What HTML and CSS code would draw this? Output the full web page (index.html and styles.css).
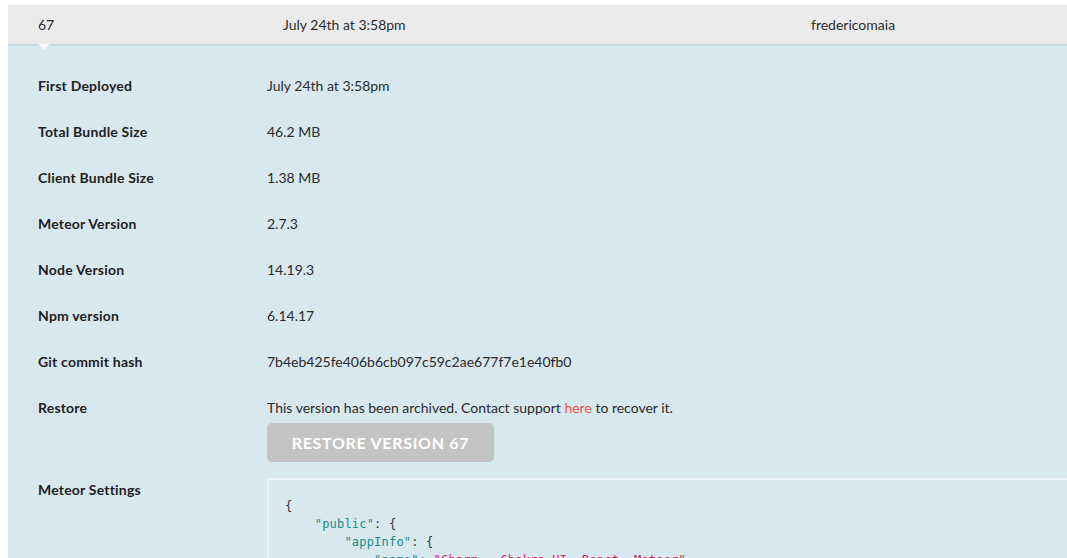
FILE: index.html
```html
<!DOCTYPE html>
<html lang="en">
<head>
<meta charset="utf-8">
<title>Version 67</title>
<link rel="stylesheet" href="styles.css">
</head>
<body>
<div class="page">
  <div class="version-head">
    <span class="col-num">67</span>
    <span class="col-date">July 24th at 3:58pm</span>
    <span class="col-user">fredericomaia</span>
    <span class="caret"></span>
  </div>
  <div class="details">
    <div class="row"><div class="label">First Deployed</div><div class="value">July 24th at 3:58pm</div></div>
    <div class="row"><div class="label">Total Bundle Size</div><div class="value">46.2 MB</div></div>
    <div class="row"><div class="label">Client Bundle Size</div><div class="value">1.38 MB</div></div>
    <div class="row"><div class="label">Meteor Version</div><div class="value">2.7.3</div></div>
    <div class="row"><div class="label">Node Version</div><div class="value">14.19.3</div></div>
    <div class="row"><div class="label">Npm version</div><div class="value">6.14.17</div></div>
    <div class="row"><div class="label">Git commit hash</div><div class="value">7b4eb425fe406b6cb097c59c2ae677f7e1e40fb0</div></div>
    <div class="row row-restore">
      <div class="label">Restore</div>
      <div class="value">
        <div>This version has been archived. Contact support <a class="link" href="#">here</a> to recover it.</div>
        <button class="restore-btn" type="button">Restore version 67</button>
      </div>
    </div>
    <div class="row row-settings">
      <div class="label">Meteor Settings</div>
      <div class="value">
<pre class="code">{
    <span class="k">"public"</span>: {
        <span class="k">"appInfo"</span>: {
            <span class="k">"name"</span>: <span class="s">"Charm - Chakra UI, React, Meteor"</span>
        }
    }
}</pre>
      </div>
    </div>
  </div>
</div>
</body>
</html>
```
FILE: styles.css
```css
html, body {
  overflow: hidden;
}
body {
  margin: 5px 0 0 8px;
  background: #ffffff;
  font-family: Lato, "Liberation Sans", sans-serif;
  font-size: 14px;
  color: #2b2b2b;
}
.page {
  width: 1100px;
}
.version-head {
  position: relative;
  display: grid;
  grid-template-columns: 245px 528px 1fr;
  align-items: center;
  height: 39px;
  padding-left: 30px;
  background: #ebebeb;
  box-shadow: 0 1px 2px rgba(0, 0, 0, 0.12);
  z-index: 1;
  line-height: 18px;
}
.caret {
  position: absolute;
  left: 30px;
  top: 39px;
  width: 0;
  height: 0;
  border-left: 6px solid transparent;
  border-right: 6px solid transparent;
  border-top: 6px solid #f7f7f7;
}
.details {
  background: #d7e8ef;
  padding: 19px 0 40px 30px;
}
.row {
  display: grid;
  grid-template-columns: 229px 1fr;
  padding: 14px 0;
  line-height: 18px;
}
.label {
  font-weight: 700;
  color: #1e1e1e;
  letter-spacing: 0.2px;
}
.row-restore {
  padding-bottom: 16px;
}
.row-settings {
  padding-top: 0;
}
.row-settings .label {
  padding-top: 3px;
}
.link {
  color: #f2573c;
  text-decoration: none;
}
.restore-btn {
  display: block;
  margin-top: 6px;
  width: 227px;
  height: 39px;
  border: none;
  border-radius: 5px;
  background: #c4c4c4;
  color: #ffffff;
  font-family: Lato, "Liberation Sans", sans-serif;
  font-size: 16px;
  font-weight: 700;
  letter-spacing: 0.7px;
  text-transform: uppercase;
  padding: 0;
}
.code {
  margin: 0;
  border: 2px solid #ecf3f6;
  padding: 17px 16px 15px;
  font-family: "DejaVu Sans Mono", "Liberation Mono", monospace;
  font-size: 12px;
  letter-spacing: 0.2px;
  line-height: 18px;
  color: #333333;
}
.k {
  color: #1a8a8c;
}
.s {
  color: #d6245a;
}
```
